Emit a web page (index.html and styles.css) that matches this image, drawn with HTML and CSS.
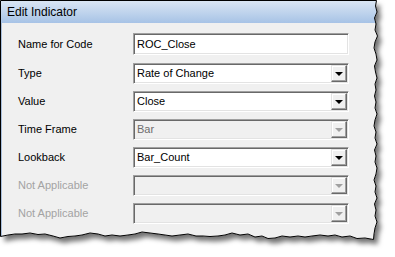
FILE: index.html
```html
<!DOCTYPE html>
<html>
<head>
<meta charset="utf-8">
<link rel="stylesheet" href="styles.css">
</head>
<body>
<div class="dialog">
  <svg class="frame" width="395" height="257" viewBox="0 0 395 257" aria-hidden="true">
    <defs>
      <linearGradient id="tg" x1="0" y1="0" x2="0" y2="1">
        <stop offset="0" stop-color="#dce7f4"/>
        <stop offset="1" stop-color="#a7c3e6"/>
      </linearGradient>
      <clipPath id="cp">
        <path id="edge" d="M0.5,0.5 H376.5 L375.5,6 L377,12 L374.5,18 L376,24 L375,30 L377.5,36 L375,42 L374,48 L376,54 L377,60 L374.5,66 L375.5,72 L377,78 L375,84 L376,90 L374.5,96 L376,102 L375,108 L377,114 L375,120 L374,126 L376,132 L375,138 L377,144 L374.5,150 L376,156 L375,162 L377,168 L376,174 L374,180 L376,186 L375,192 L377,198 L374.5,204 L376,210 L375,216 L377,222 L375,228 L374,234 L373.5,239.5 L365,238 L357,238.5 L350,236 L342,237 L335,235 L328,236 L320,235 L312,236 L305,237 L298,236 L290,237 L282,236 L275,238 L268,238.5 L262,236 L255,237 L248,234 L240,235 L232,233 L225,235 L218,236 L210,236.5 L203,236 L196,236 L188,234 L180,235 L172,236 L165,235 L158,234 L150,233 L142,232 L135,234 L128,235 L120,236 L112,235 L105,236 L98,234 L90,233 L82,235 L75,236 L68,236.5 L60,238 L53,236 L45,234 L38,234.5 L30,233 L22,234 L15,234 L8,235 L0.5,236.5 Z"/>
      </clipPath>
      <filter id="sh" x="-5%" y="-5%" width="115%" height="120%">
        <feDropShadow dx="4" dy="5" stdDeviation="2.5" flood-color="#000" flood-opacity="0.55"/>
      </filter>
    </defs>
    <g filter="url(#sh)">
      <use href="#edge" fill="#f0f0f0"/>
    </g>
    <g clip-path="url(#cp)">
      <rect x="0" y="0" width="385" height="23" fill="url(#tg)"/>
      <rect x="1" y="23" width="1" height="220" fill="#a9bfdc"/>
    </g>
    <use href="#edge" fill="none" stroke="#000" stroke-width="1"/>
  </svg>

  <div class="title">Edit Indicator</div>

  <div class="form">
    <div class="label">Name for Code</div>
    <div class="field text">ROC_Close</div>

    <div class="label">Type</div>
    <div class="field combo"><span class="val">Rate of Change</span><span class="btn"><span class="tri"></span></span></div>

    <div class="label">Value</div>
    <div class="field combo"><span class="val">Close</span><span class="btn"><span class="tri"></span></span></div>

    <div class="label">Time Frame</div>
    <div class="field combo disabled"><span class="val">Bar</span><span class="btn"><span class="tri"></span></span></div>

    <div class="label">Lookback</div>
    <div class="field combo"><span class="val">Bar_Count</span><span class="btn"><span class="tri"></span></span></div>

    <div class="label dim">Not Applicable</div>
    <div class="field combo disabled"><span class="val"></span><span class="btn"><span class="tri"></span></span></div>

    <div class="label dim">Not Applicable</div>
    <div class="field combo disabled"><span class="val"></span><span class="btn"><span class="tri"></span></span></div>
  </div>
</div>
</body>
</html>
```

FILE: styles.css
```css
html, body {
  margin: 0;
  padding: 0;
  background: #ffffff;
}

.dialog {
  position: relative;
  width: 395px;
  height: 257px;
  font-family: "Liberation Sans", Arial, sans-serif;
  font-size: 11px;
  color: #000;
}

.frame {
  position: absolute;
  left: 0;
  top: 0;
  z-index: 0;
}

.title {
  position: relative;
  z-index: 1;
  height: 23px;
  box-sizing: border-box;
  padding: 5px 0 0 7px;
  font-size: 12px;
  line-height: 14px;
}

.form {
  position: relative;
  z-index: 1;
  display: grid;
  grid-template-columns: 115px 216px;
  grid-template-rows: 23px repeat(6, 21px);
  row-gap: 7px;
  align-items: center;
  padding: 10px 0 0 18px;
}

.label {
  line-height: 13px;
}

.label.dim {
  color: #a3a3a3;
}

.field {
  box-sizing: border-box;
  height: 21px;
  border: 1px solid;
  border-color: #a0a0a0 #ffffff #ffffff #a0a0a0;
  box-shadow: inset 1px 1px 0 #696969, inset -1px -1px 0 #e3e3e3;
  background: #ffffff;
  display: flex;
  align-items: center;
  padding-left: 3px;
}

.field.text {
  height: 22px;
  align-self: start;
}

.combo .val {
  flex: 1;
  line-height: 13px;
}

.combo.disabled {
  background: #f0f0f0;
}

.combo.disabled .val {
  color: #6d6d6d;
}

.btn {
  box-sizing: border-box;
  width: 16px;
  height: 17px;
  margin-right: 1px;
  background: #f0f0f0;
  border-top: 1px solid #e3e3e3;
  border-left: 1px solid #e3e3e3;
  border-right: 1px solid #696969;
  border-bottom: 1px solid #696969;
  box-shadow: inset -1px -1px 0 #a0a0a0, inset 1px 1px 0 #ffffff;
  display: flex;
  align-items: center;
  justify-content: center;
}

.tri {
  width: 0;
  height: 0;
  border-left: 4px solid transparent;
  border-right: 4px solid transparent;
  border-top: 4px solid #000;
  margin-top: 1px;
}

.disabled .tri {
  border-top-color: #a0a0a0;
}
```
